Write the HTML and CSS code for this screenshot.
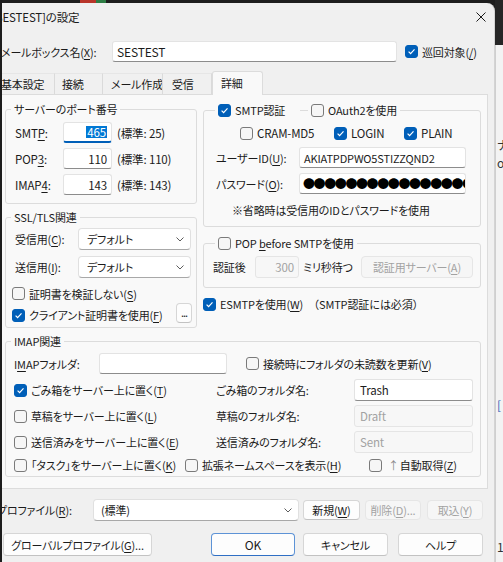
FILE: index.html
```html
<!DOCTYPE html>
<html lang="ja">
<head>
<meta charset="utf-8">
<title>[SESTEST]の設定</title>
<link rel="stylesheet" href="styles.css">
</head>
<body>
<div class="screen">
  <div class="dialog">
    <header class="titlebar">
      <span class="title">[SESTEST]の設定</span>
      <svg class="close" viewBox="0 0 10 10"><path d="M0.5 0.5L9.5 9.5M9.5 0.5L0.5 9.5"/></svg>
    </header>

    <div class="mailbox-row">
      <span class="mailbox-label">メールボックス名(<u>X</u>):</span>
      <span class="field mailbox-input">SESTEST</span>
      <span class="opt"><span class="check is-on"><svg viewBox="0 0 11 11"><path d="M2.6 5.6L4.6 7.6L8.5 3.4"/></svg></span><span>巡回対象(<u>/</u>)</span></span>
    </div>

    <div class="tabs">
      <span class="tab tab-basic">基本設定</span>
      <span class="tab tab-conn">接続</span>
      <span class="tab tab-compose">メール作成</span>
      <span class="tab tab-recv">受信</span>
      <span class="tab tab-detail is-active">詳細</span>
    </div>

    <section class="panel">
      <div class="panel-cols">
        <div class="col col-left">
          <fieldset class="group ports">
            <legend>サーバーのポート番号</legend>
            <div class="group-body">
              <div class="port-row">
                <span class="port-label">SMT<u>P</u>:</span>
                <span class="field port is-focused"><span class="selected-text">465</span></span>
                <span class="port-note">(標準: 25)</span>
              </div>
              <div class="port-row">
                <span class="port-label">POP<u>3</u>:</span>
                <span class="field port">110</span>
                <span class="port-note">(標準: 110)</span>
              </div>
              <div class="port-row">
                <span class="port-label">IMAP<u>4</u>:</span>
                <span class="field port">143</span>
                <span class="port-note">(標準: 143)</span>
              </div>
            </div>
          </fieldset>

          <fieldset class="group ssl">
            <legend>SSL/TLS関連</legend>
            <div class="group-body">
              <div class="ssl-row">
                <span class="ssl-label">受信用(<u>C</u>):</span>
                <span class="select ssl-select"><span>デフォルト</span><svg class="chev" viewBox="0 0 8 5"><path d="M0.5 0.5L4 4L7.5 0.5"/></svg></span>
              </div>
              <div class="ssl-row">
                <span class="ssl-label">送信用(<u>I</u>):</span>
                <span class="select ssl-select"><span>デフォルト</span><svg class="chev" viewBox="0 0 8 5"><path d="M0.5 0.5L4 4L7.5 0.5"/></svg></span>
              </div>
              <div class="cert-row">
                <span class="opt"><span class="check"></span><span>証明書を検証しない(<u>S</u>)</span></span>
              </div>
              <div class="client-row">
                <span class="opt"><span class="check is-on"><svg viewBox="0 0 11 11"><path d="M2.6 5.6L4.6 7.6L8.5 3.4"/></svg></span><span>クライアント証明書を使用(<u>F</u>)</span></span>
                <span class="btn btn-more">...</span>
              </div>
            </div>
          </fieldset>
        </div>

        <div class="col col-right">
          <fieldset class="group smtp-auth">
            <legend class="check-legend">
              <span class="opt auth-main"><span class="check is-on"><svg viewBox="0 0 11 11"><path d="M2.6 5.6L4.6 7.6L8.5 3.4"/></svg></span><span>SMTP認証</span></span>
              <span class="legend-rule"></span>
              <span class="opt"><span class="check"></span><span>OAuth2を使用</span></span>
            </legend>
            <div class="group-body">
              <div class="auth-methods">
                <span class="opt method-cram"><span class="check"></span><span>CRAM-MD5</span></span>
                <span class="opt method-login"><span class="check is-on"><svg viewBox="0 0 11 11"><path d="M2.6 5.6L4.6 7.6L8.5 3.4"/></svg></span><span>LOGIN</span></span>
                <span class="opt"><span class="check is-on"><svg viewBox="0 0 11 11"><path d="M2.6 5.6L4.6 7.6L8.5 3.4"/></svg></span><span>PLAIN</span></span>
              </div>
              <div class="cred-row">
                <span class="cred-label">ユーザーID(<u>U</u>):</span>
                <span class="field cred-input">AKIATPDPWO5STIZZQND2</span>
              </div>
              <div class="cred-row">
                <span class="cred-label">パスワード(<u>O</u>):</span>
                <span class="field cred-input password"><span class="dots">●●●●●●●●●●●●●●●●●●</span></span>
              </div>
              <div class="auth-note">※省略時は受信用のIDとパスワードを使用</div>
            </div>
          </fieldset>

          <fieldset class="group pop-before">
            <legend class="check-legend">
              <span class="opt"><span class="check"></span><span>POP <u>b</u>efore SMTPを使用</span></span>
            </legend>
            <div class="group-body">
              <div class="wait-row">
                <span class="wait-label">認証後</span>
                <span class="field wait-input is-disabled">300</span>
                <span class="wait-unit">ミリ秒待つ</span>
                <span class="btn is-disabled btn-auth-server">認証用サーバー(<u>A</u>)</span>
              </div>
            </div>
          </fieldset>

          <div class="esmtp-row">
            <span class="opt"><span class="check is-on"><svg viewBox="0 0 11 11"><path d="M2.6 5.6L4.6 7.6L8.5 3.4"/></svg></span><span>ESMTPを使用(<u>W</u>)</span></span>
            <span class="esmtp-note">（SMTP認証には必須）</span>
          </div>
        </div>
      </div>

      <fieldset class="group imap">
        <legend>IMAP関連</legend>
        <div class="group-body">
          <div class="imap-row imap-top">
            <span class="imap-folder-label">I<u>M</u>APフォルダ:</span>
            <span class="field imap-folder-input"></span>
            <span class="opt unread-opt"><span class="check"></span><span>接続時にフォルダの未読数を更新(<u>V</u>)</span></span>
          </div>
          <div class="imap-row folder-row trash-row">
            <span class="opt folder-opt"><span class="check is-on"><svg viewBox="0 0 11 11"><path d="M2.6 5.6L4.6 7.6L8.5 3.4"/></svg></span><span>ごみ箱をサーバー上に置く(<u>T</u>)</span></span>
            <span class="folder-label">ごみ箱のフォルダ名:</span>
            <span class="field folder-input">Trash</span>
          </div>
          <div class="imap-row folder-row">
            <span class="opt folder-opt"><span class="check"></span><span>草稿をサーバー上に置く(<u>L</u>)</span></span>
            <span class="folder-label">草稿のフォルダ名:</span>
            <span class="field folder-input is-disabled">Draft</span>
          </div>
          <div class="imap-row folder-row">
            <span class="opt folder-opt"><span class="check"></span><span>送信済みをサーバー上に置く(<u>E</u>)</span></span>
            <span class="folder-label">送信済みのフォルダ名:</span>
            <span class="field folder-input is-disabled">Sent</span>
          </div>
          <div class="imap-row imap-bottom">
            <span class="opt task-opt"><span class="check"></span><span>「タスク」をサーバー上に置く(<u>K</u>)</span></span>
            <span class="opt ns-opt"><span class="check"></span><span>拡張ネームスペースを表示(<u>H</u>)</span></span>
            <span class="opt"><span class="check"></span><span><span class="arrow">↑</span>自動取得(<u>Z</u>)</span></span>
          </div>
        </div>
      </fieldset>
    </section>

    <div class="profile-row">
      <span class="profile-label">プロファイル(<u>R</u>):</span>
      <span class="select profile-select"><span>(標準)</span><svg class="chev" viewBox="0 0 8 5"><path d="M0.5 0.5L4 4L7.5 0.5"/></svg></span>
      <span class="btn btn-new"><span>新規(<u>W</u>)</span></span>
      <span class="btn is-disabled btn-del"><span>削除(<u>D</u>)...</span></span>
      <span class="btn is-disabled btn-import"><span>取込(<u>Y</u>)</span></span>
    </div>

    <div class="button-row">
      <span class="btn btn-global"><span>グローバルプロファイル(<u>G</u>)...</span></span>
      <span class="btn btn-primary btn-ok">OK</span>
      <span class="btn btn-cancel">キャンセル</span>
      <span class="btn btn-help">ヘルプ</span>
    </div>
  </div>

  <aside class="backdrop">
    <div class="backdrop-dark"></div>
    <div class="backdrop-light">
      <span class="frag frag-a">ナ</span>
      <span class="frag frag-b">o</span>
      <span class="frag frag-c">[</span>
      <span class="frag frag-d">1</span>
    </div>
  </aside>

  <div class="edge-left"></div>
</div>
</body>
</html>
```

FILE: styles.css
```css
* { box-sizing: border-box; }

html, body { margin: 0; padding: 0; }

body {
  font-family: "Noto Sans CJK JP", "Noto Sans", sans-serif;
  font-size: 11px;
  line-height: 16px;
  letter-spacing: -0.15px;
  color: #1b1b1b;
  font-feature-settings: "palt";
  text-autospace: no-autospace;
}

u { text-underline-offset: 2px; }

/* desktop around the dialog */
.screen {
  position: relative;
  width: 503px;
  height: 562px;
  overflow: hidden;
  display: flex;
  background: linear-gradient(to right, #1e1e1e 80px, #b8352a 80px 96px, #2e7d45 96px 106px, #1e1e1e 106px);
}

.edge-left {
  position: absolute;
  left: 0;
  top: 0;
  width: 2px;
  height: 100%;
  background: #1c1c1c;
}

.backdrop {
  flex: 1;
  display: flex;
  flex-direction: column;
}
.backdrop-dark { height: 45px; background: #262626; }
.backdrop-light {
  position: relative;
  flex: 1;
  background: #f3f3f3;
  border-left: 1px solid #cfcfcf;
}
.frag { position: absolute; left: 1px; font-size: 12px; color: #333; }
.frag-a { top: 92px; }
.frag-b { top: 110px; }
.frag-c { top: 352px; color: #2a62b8; }
.frag-d { top: 494px; }

/* dialog window */
.dialog {
  width: 495px;
  flex: none;
  margin-top: 3px;
  background: #f0f0f0;
  border-top-right-radius: 8px;
  border-right: 1px solid #d4d4d4;
  display: flex;
  flex-direction: column;
  white-space: nowrap;
}

.titlebar {
  height: 28px;
  display: flex;
  align-items: center;
  justify-content: space-between;
}
.title { margin-left: -8px; font-size: 11.5px; }
.close {
  width: 10px;
  height: 10px;
  margin-right: 8px;
  fill: none;
  stroke: #1b1b1b;
  stroke-width: 1;
}

/* generic controls */
.opt {
  display: inline-flex;
  align-items: center;
  gap: 4px;
  white-space: nowrap;
}

.check {
  width: 13px;
  height: 13px;
  flex: none;
  border: 1px solid #7a7a7a;
  border-radius: 3px;
  background: #f6f6f6;
  display: inline-flex;
  align-items: center;
  justify-content: center;
}
.check.is-on { background: #005fb8; border-color: #005fb8; }
.check svg {
  width: 11px;
  height: 11px;
  fill: none;
  stroke: #fff;
  stroke-width: 1.2;
}

.field {
  display: flex;
  align-items: center;
  height: 21px;
  padding: 0 5px;
  background: #fff;
  border: 1px solid #e3e3e3;
  border-bottom-color: #8c8c8c;
  border-radius: 3px;
  white-space: nowrap;
  overflow: hidden;
  font-size: 11.5px;
}
.field.is-disabled {
  background: #f7f7f7;
  border-color: #e5e5e5;
  color: #a2a2a2;
}

.select {
  display: flex;
  align-items: center;
  justify-content: space-between;
  height: 22px;
  padding: 0 6px 0 8px;
  background: #fff;
  border: 1px solid #e0e0e0;
  border-bottom-color: #a8a8a8;
  border-radius: 4px;
}
.chev {
  width: 8px;
  height: 5px;
  fill: none;
  stroke: #5c5c5c;
  stroke-width: 1;
}

.btn {
  display: flex;
  align-items: center;
  justify-content: center;
  height: 20px;
  background: #fdfdfd;
  border: 1px solid #d6d6d6;
  border-bottom-color: #c2c2c2;
  border-radius: 4px;
  white-space: nowrap;
}
.btn.is-disabled {
  background: #f6f6f6;
  border-color: #e6e6e6;
  color: #a2a2a2;
}
.btn-primary { border-color: #5d93d6; border-bottom-color: #2f6fc4; }

/* mailbox name row */
.mailbox-row {
  height: 21px;
  margin-top: 10px;
  display: flex;
  align-items: center;
}
.mailbox-label { width: 111px; margin-left: 1px; }
.mailbox-input { width: 285px; padding-left: 4px; font-size: 12px; }
.mailbox-row .opt { margin-left: 8px; }

/* tab strip */
.tabs {
  height: 23px;
  margin-top: 9px;
  display: flex;
  align-items: flex-end;
}
.tab {
  height: 21px;
  display: flex;
  align-items: center;
  padding-left: 7px;
  border-top: 1px solid #e6e6e6;
  border-right: 1px solid #dadada;
  flex: none;
  overflow: hidden;
}
.tab-basic { width: 61px; margin-left: -6px; padding-left: 7px; }
.tab-conn { width: 48px; }
.tab-compose { width: 60px; padding-left: 8px; }
.tab-recv { width: 49px; padding-left: 9px; }
.tab-detail {
  width: 51px;
  padding-left: 8px;
}
.tab.is-active {
  position: relative;
  z-index: 1;
  height: 24px;
  margin-bottom: -1px;
  background: #f9f9f9;
  border: 1px solid #dcdcdc;
  border-bottom: none;
  border-radius: 3px 3px 0 0;
  padding-bottom: 2px;
}

/* tab page */
.panel {
  width: 488px;
  background: #f9f9f9;
  border: 1px solid #dcdcdc;
  padding: 7px 6px 11px 4px;
}

.panel-cols {
  display: grid;
  grid-template-columns: 192px 278px;
  column-gap: 6px;
}
.col-right { margin-top: 1px; }

.group {
  margin: 0;
  padding: 0;
  min-width: 0;
  border: 1px solid #dcdcdc;
  border-radius: 3px;
}
.group legend {
  margin-left: 5px;
  padding: 0 3px;
  line-height: 14px;
  height: 14px;
}
.group .check-legend {
  margin-left: 11px;
  display: flex;
  align-items: center;
}

/* server ports */
.ports .group-body { padding: 6px 3px 8px 9px; font-size: 11.5px; }
.port-row { height: 21px; display: flex; align-items: center; }
.port-row + .port-row { margin-top: 5px; }
.port-label { width: 48px; }
.port {
  width: 49px;
  justify-content: flex-end;
  padding-right: 4px;
}
.port.is-focused {
  border-bottom: 2px solid #005fb8;
}
.selected-text {
  background: #0078d4;
  color: #fff;
  line-height: 12px;
  padding: 0 1px;
}
.port-note { margin-left: 5px; }

/* ssl / tls */
.ssl { margin-top: 6px; }
.ssl .group-body { padding: 4px 4px 4px 6px; }
.ssl-row { height: 22px; display: flex; align-items: center; }
.ssl-row + .ssl-row { margin-top: 6px; }
.ssl-label { width: 66px; padding-left: 3px; }
.ssl-select { width: 113px; }
.cert-row { height: 17px; margin-top: 7px; display: flex; align-items: center; }
.client-row {
  height: 20px;
  margin-top: 1px;
  display: flex;
  align-items: center;
  justify-content: space-between;
}
.client-row .opt { margin-top: 4px; }
.btn-more { width: 16px; height: 20px; font-size: 11px; letter-spacing: -1px; padding-bottom: 3px; }

/* smtp auth */
.auth-main { width: 82px; }
.legend-rule {
  width: 8px;
  height: 1px;
  margin-right: 3px;
  background: #dcdcdc;
}
.smtp-auth .group-body { padding: 8px 7px 8px 12px; }
.auth-methods { height: 16px; margin-left: 24px; display: flex; align-items: center; font-size: 11.5px; }
.method-cram { width: 94px; }
.method-login { width: 70px; }
.cred-row { height: 21px; margin-top: 5px; display: flex; align-items: center; }
.auth-methods + .cred-row { margin-top: 6px; }
.cred-label { width: 83px; }
.cred-input { width: 167px; padding-left: 4px; font-size: 11px; }
.password { padding-left: 3px; }
.dots {
  font-size: 12px;
  letter-spacing: -1.4px;
  color: #000;
  font-feature-settings: normal;
}
.auth-note { height: 16px; margin-top: 8px; margin-left: 16px; }

/* pop before smtp */
.pop-before { margin-top: 9px; }
.pop-before .group-body { padding: 6px 7px 9px 9px; }
.wait-row { height: 22px; display: flex; align-items: center; }
.wait-label { width: 42px; }
.wait-input { width: 44px; height: 22px; justify-content: flex-end; padding-right: 4px; }
.wait-unit { margin-left: 4px; }
.btn-auth-server { width: 112px; height: 22px; margin-left: auto; }

/* esmtp */
.esmtp-row { height: 16px; margin-top: 8px; display: flex; align-items: center; }
.esmtp-note { margin-left: 5px; font-feature-settings: normal; }

/* imap */
.imap { margin-top: 6px; }
.imap .group-body { padding: 5px 6px 3px 8px; }
.imap-row { display: flex; align-items: center; }
.imap-top { height: 21px; }
.imap-folder-label { width: 85px; }
.imap-folder-input { width: 128px; }
.unread-opt { margin-left: 19px; }
.folder-row { height: 22px; margin-top: 4px; }
.trash-row { margin-top: 5px; }
.folder-opt { width: 202px; }
.folder-label { width: 138px; }
.folder-input { width: 119px; height: 22px; padding-left: 5px; }
.imap-bottom { height: 16px; margin-top: 4px; }
.task-opt { width: 171px; }
.ns-opt { width: 184px; }
.arrow { color: #8a8a8a; margin: 0 1px 0 2px; }

/* profile row */
.profile-row {
  height: 22px;
  margin-top: 10px;
  display: flex;
  align-items: center;
}
.profile-label { width: 96px; margin-left: -3px; }
.profile-select { width: 206px; padding-left: 7px; }
.btn-new { width: 57px; margin-left: 4px; }
.btn-del { width: 56px; margin-left: 5px; }
.btn-import { width: 56px; margin-left: 6px; }

/* dialog buttons */
.button-row {
  height: 23px;
  margin-top: 12px;
  display: flex;
}
.button-row .btn { height: 23px; }
.btn-global { width: 149px; margin-left: 3px; }
.btn-ok { width: 84px; margin-left: 59px; font-size: 12px; }
.btn-cancel { width: 85px; margin-left: 8px; }
.btn-help { width: 85px; margin-left: 10px; }
```
